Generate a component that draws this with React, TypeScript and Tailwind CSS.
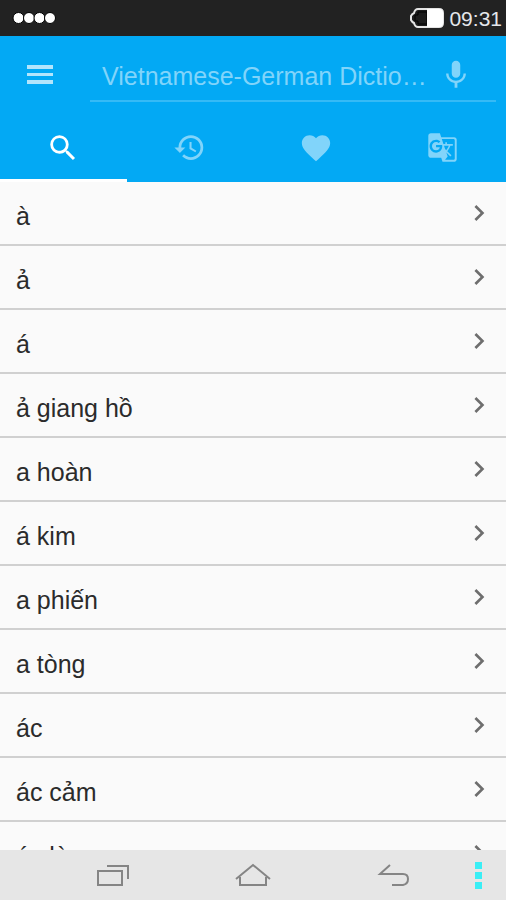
import React, { useState } from 'react';
import clsx from 'clsx';
import {
  MdFavorite,
  MdGTranslate,
  MdHistory,
  MdMic,
  MdNavigateNext,
  MdSearch,
} from 'react-icons/md';

const WORDS = [
  'à',
  'ả',
  'á',
  'ả giang hồ',
  'a hoàn',
  'á kim',
  'a phiến',
  'a tòng',
  'ác',
  'ác cảm',
  'ác là',
];

const TABS = [
  { id: 'search', label: 'Search', Icon: MdSearch, size: 34 },
  { id: 'history', label: 'History', Icon: MdHistory, size: 33 },
  { id: 'favorites', label: 'Favorites', Icon: MdFavorite, size: 34 },
  { id: 'translate', label: 'Translate', Icon: MdGTranslate, size: 31 },
];

function StatusBar() {
  return (
    <div className="flex h-9 shrink-0 items-center justify-between bg-[#222222] pl-3 pr-1 text-white">
      <svg width="46" height="14" viewBox="0 0 46 14" aria-hidden="true">
        <g fill="#fff" stroke="#000" strokeWidth="1">
          <circle cx="6.5" cy="7" r="5.5" />
          <circle cx="17" cy="7" r="5.5" />
          <circle cx="27.5" cy="7" r="5.5" />
          <circle cx="38" cy="7" r="5.5" />
        </g>
      </svg>
      <div className="flex items-center gap-1">
        <svg width="36" height="22" viewBox="0 0 36 22" aria-hidden="true">
          <path
            d="M9 2h21q4 0 4 4v10q0 4-4 4H9q-3 0-4-4-2-1-3-3V9q1-2 3-3 1-4 4-4z"
            fill="#1c1c1c"
            stroke="#e4e4e4"
            strokeWidth="2"
          />
          <path d="M9 5h9v12H9v-3H6V8h3z" fill="none" stroke="#000" strokeWidth="1" />
          <path d="M18 2h12q4 0 4 4v10q0 4-4 4H18z" fill="#fff" />
        </svg>
        <span className="pt-0.5 text-[21px] leading-8 text-gray-200">09:31</span>
      </div>
    </div>
  );
}

function WordRow({ word }: { word: string }) {
  return (
    <li className="border-b-2 border-[#d0d0d0]">
      <button className="flex h-[62px] w-full items-center justify-between pl-4 pr-[11px] text-left">
        <span className="pt-1.5 text-[25px] leading-8 text-[#2b2b2b]">{word}</span>
        <MdNavigateNext size={32} className="text-[#6e6e6e]" />
      </button>
    </li>
  );
}

function NavBar() {
  return (
    <nav className="relative grid h-[50px] shrink-0 grid-cols-3 bg-[#e6e6e6] px-[43px] text-[#858585]">
      <button aria-label="Recent apps" className="flex items-center justify-center">
        <svg width="34" height="24" viewBox="0 0 34 24" fill="none" stroke="currentColor" strokeWidth="2">
          <path d="M2 8h24v14H2z" />
          <path d="M11 3h21v13" />
        </svg>
      </button>
      <button aria-label="Home" className="flex items-center justify-center">
        <svg width="38" height="24" viewBox="0 0 38 24" fill="none" stroke="currentColor" strokeWidth="2">
          <path d="M2 16L19 2l17 14" />
          <path d="M6 14v8h26v-8" />
        </svg>
      </button>
      <button aria-label="Back" className="flex items-center justify-center">
        <svg width="34" height="24" viewBox="0 0 34 24" fill="none" stroke="currentColor" strokeWidth="2">
          <path d="M14 2L4 11h23q5 0 5 5t-5 6H16" />
        </svg>
      </button>
      <button aria-label="More" className="absolute inset-y-0 right-6 flex flex-col items-center justify-center gap-[3px]">
        <span className="h-[7px] w-[7px] bg-[#3beef5]" />
        <span className="h-[7px] w-[7px] bg-[#3beef5]" />
        <span className="h-[7px] w-[7px] bg-[#3beef5]" />
      </button>
    </nav>
  );
}

export default function App() {
  const [active, setActive] = useState('search');
  const [query, setQuery] = useState('');

  return (
    <div className="flex h-screen flex-col bg-[#fafafa] font-['Liberation_Sans',sans-serif]">
      <StatusBar />

      <header className="shrink-0 bg-[#03a9f4]">
        <div className="flex h-[78px] items-center pl-[22px] pr-[10px]">
          <button aria-label="Menu" className="text-[#b3e5fc]">
            <svg width="36" height="36" viewBox="0 0 36 36" fill="currentColor">
              <path d="M5 8h26v4H5zM5 16h26v3H5zM5 23h26v4H5z" />
            </svg>
          </button>
          <div className="ml-8 flex h-[54px] min-w-0 flex-1 items-center border-b-2 border-[#35baf6] pl-3 pr-[23px] pt-0.5">
            <input
              aria-label="Search the dictionary"
              placeholder="Vietnamese-German Dictionary"
              value={query}
              onChange={e => setQuery(e.target.value)}
              className="h-11 min-w-0 flex-1 text-ellipsis bg-transparent pt-0.5 text-[25px] leading-8 text-white outline-none placeholder:text-[#81d4fa]"
            />
            <button aria-label="Voice search" className="text-[#81d4fa]">
              <MdMic size={34} />
            </button>
          </div>
        </div>

        <div role="tablist" className="grid grid-cols-4">
          {TABS.map(({ id, label, Icon, size }) => (
            <button
              key={id}
              role="tab"
              aria-label={label}
              aria-selected={active === id}
              onClick={() => setActive(id)}
              className={clsx(
                'flex h-[68px] items-center justify-center border-b-3 pt-0.5',
                active === id ? 'border-white text-white' : 'border-transparent text-[#81d4fa]'
              )}
            >
              <Icon size={size} />
            </button>
          ))}
        </div>
      </header>

      <ul className="min-h-0 flex-1 overflow-hidden">
        {WORDS.map(word => (
          <WordRow key={word} word={word} />
        ))}
      </ul>

      <NavBar />
    </div>
  );
}
